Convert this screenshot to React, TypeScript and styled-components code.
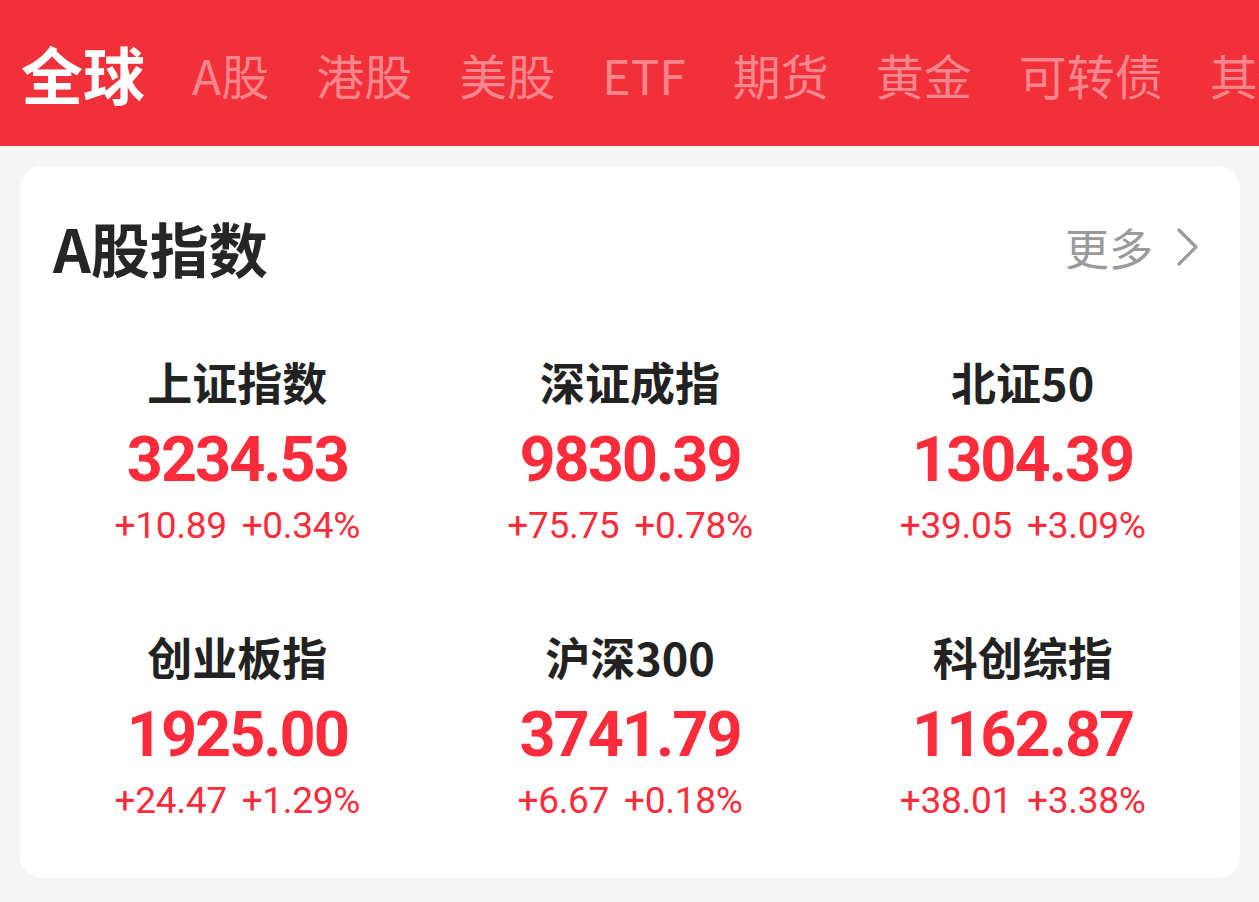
import styled, { createGlobalStyle } from "styled-components";

// Style >>>
const GlobalStyle = createGlobalStyle`
  html, body {
    margin: 0;
    padding: 0;
    background: #f5f5f5;
  }
  body {
    font-family: "Noto Sans CJK SC", "Noto Sans", sans-serif;
  }
`;
const Page = styled.div`
  width: 1259px;
  min-height: 902px;
  background: #f5f5f5;
  overflow: hidden;
`;
const Header = styled.header`
  height: 146px;

  display: flex;
  align-items: center;
  gap: 47px;

  background: #f2303a;
  padding: 0 0 0 21px;
  white-space: nowrap;
  overflow: hidden;
`;
const Tab = styled.div<{ $active?: boolean }>`
  flex: none;
  font-size: ${({ $active }) => ($active ? "62px" : "48px")};
  font-weight: ${({ $active }) => ($active ? 700 : 400)};
  line-height: 1;
  color: ${({ $active }) => ($active ? "#ffffff" : "#f7878c")};
  margin-top: ${({ $active }) => ($active ? "0" : "2px")};
`;
const Card = styled.section`
  margin: 20px 19px 0 20px;
  background: #ffffff;
  border-radius: 22px;
  padding: 0 21px;
`;
const TitleRow = styled.div`
  height: 162px;

  display: flex;
  align-items: center;
  justify-content: space-between;

  padding: 0 18px 0 12px;
`;
const Title = styled.h2`
  margin: 0;
  font-size: 59px;
  font-weight: 700;
  color: #262626;
  line-height: 1;
`;
const More = styled.div`
  display: flex;
  align-items: center;
  gap: 22px;

  font-size: 44px;
  color: #9a9a9a;
  line-height: 1;
`;
const Grid = styled.div`
  display: grid;
  grid-template-columns: repeat(3, 1fr);
  grid-auto-rows: 275px;
`;
const Cell = styled.div`
  display: flex;
  flex-direction: column;
  align-items: center;
  padding-top: 26px;
`;
const Name = styled.div`
  font-size: 45px;
  font-weight: 700;
  color: #222222;
  line-height: 56px;
`;
const Value = styled.div`
  margin-top: 15px;
  font-family: Roboto, "Liberation Sans", sans-serif;
  font-size: 63px;
  font-weight: 700;
  letter-spacing: -2px;
  line-height: 70px;
  color: #fe2b3b;
`;
const Change = styled.div`
  margin-top: 9px;

  display: flex;
  gap: 15px;

  font-family: Roboto, "Liberation Sans", sans-serif;
  font-size: 37px;
  font-weight: 400;
  letter-spacing: -0.3px;
  line-height: 44px;
  color: #fe2b3b;
`;
// Style <<<

const tabs = ["全球", "A股", "港股", "美股", "ETF", "期货", "黄金", "可转债", "其他"];

const indices = [
  { name: "上证指数", value: "3234.53", diff: "+10.89", pct: "+0.34%" },
  { name: "深证成指", value: "9830.39", diff: "+75.75", pct: "+0.78%" },
  { name: "北证50", value: "1304.39", diff: "+39.05", pct: "+3.09%" },
  { name: "创业板指", value: "1925.00", diff: "+24.47", pct: "+1.29%" },
  { name: "沪深300", value: "3741.79", diff: "+6.67", pct: "+0.18%" },
  { name: "科创综指", value: "1162.87", diff: "+38.01", pct: "+3.38%" },
];

const Chevron = () => (
  <svg width="26" height="40" viewBox="0 0 26 40" fill="none">
    <polyline
      points="4,3 21,20 4,37"
      stroke="#9a9a9a"
      strokeWidth="3.2"
      strokeLinecap="round"
      strokeLinejoin="round"
    />
  </svg>
);

const App = () => {
  return (
    <Page>
      <GlobalStyle />
      <Header>
        {tabs.map((tab, i) => (
          <Tab key={tab} $active={i === 0}>
            {tab}
          </Tab>
        ))}
      </Header>
      <Card>
        <TitleRow>
          <Title>A股指数</Title>
          <More>
            更多
            <Chevron />
          </More>
        </TitleRow>
        <Grid>
          {indices.map((item) => (
            <Cell key={item.name}>
              <Name>{item.name}</Name>
              <Value>{item.value}</Value>
              <Change>
                <span>{item.diff}</span>
                <span>{item.pct}</span>
              </Change>
            </Cell>
          ))}
        </Grid>
      </Card>
    </Page>
  );
};

export default App;
